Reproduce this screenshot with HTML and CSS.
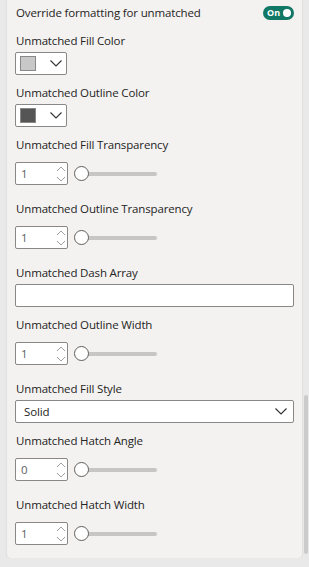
FILE: index.html
```html
<!DOCTYPE html>
<html lang="en">
<head>
    <meta charset="UTF-8">
    <meta name="viewport" content="width=device-width, initial-scale=1.0">
    <title>Unmatched Formatting</title>
    <link rel="stylesheet" href="styles.css">
</head>
<body>
    <div class="pane">
        <div class="card">
            <div class="header">
                <span class="header-title">Override formatting for unmatched</span>
                <div class="toggle"><span>On</span><i class="knob"></i></div>
            </div>

            <div class="group">
                <div class="label">Unmatched Fill Color</div>
                <div class="color-pick">
                    <span class="swatch swatch-light"></span>
                    <svg class="chevron" width="12" height="7" viewBox="0 0 12 7"><path d="M0.5 0.5 L6 6 L11.5 0.5" fill="none" stroke="#323130" stroke-width="1.1"/></svg>
                </div>
            </div>

            <div class="group">
                <div class="label">Unmatched Outline Color</div>
                <div class="color-pick">
                    <span class="swatch swatch-dark"></span>
                    <svg class="chevron" width="12" height="7" viewBox="0 0 12 7"><path d="M0.5 0.5 L6 6 L11.5 0.5" fill="none" stroke="#323130" stroke-width="1.1"/></svg>
                </div>
            </div>

            <div class="group">
                <div class="label">Unmatched Fill Transparency</div>
                <div class="slider-row">
                    <div class="num-input">
                        <span class="num-value">1</span>
                        <svg class="spinner" width="10" height="16" viewBox="0 0 10 16"><path d="M1 5 L5 1 L9 5 M1 11 L5 15 L9 11" fill="none" stroke="#a19f9d" stroke-width="1"/></svg>
                    </div>
                    <div class="slider"><span class="thumb"></span><span class="track"></span></div>
                </div>
            </div>

            <div class="group">
                <div class="label">Unmatched Outline Transparency</div>
                <div class="slider-row">
                    <div class="num-input">
                        <span class="num-value">1</span>
                        <svg class="spinner" width="10" height="16" viewBox="0 0 10 16"><path d="M1 5 L5 1 L9 5 M1 11 L5 15 L9 11" fill="none" stroke="#a19f9d" stroke-width="1"/></svg>
                    </div>
                    <div class="slider"><span class="thumb"></span><span class="track"></span></div>
                </div>
            </div>

            <div class="group">
                <div class="label">Unmatched Dash Array</div>
                <div class="text-input"></div>
            </div>

            <div class="group">
                <div class="label">Unmatched Outline Width</div>
                <div class="slider-row">
                    <div class="num-input">
                        <span class="num-value">1</span>
                        <svg class="spinner" width="10" height="16" viewBox="0 0 10 16"><path d="M1 5 L5 1 L9 5 M1 11 L5 15 L9 11" fill="none" stroke="#a19f9d" stroke-width="1"/></svg>
                    </div>
                    <div class="slider"><span class="thumb"></span><span class="track"></span></div>
                </div>
            </div>

            <div class="group">
                <div class="label">Unmatched Fill Style</div>
                <div class="dropdown">
                    <span>Solid</span>
                    <svg class="chevron" width="12" height="7" viewBox="0 0 12 7"><path d="M0.5 0.5 L6 6 L11.5 0.5" fill="none" stroke="#323130" stroke-width="1.1"/></svg>
                </div>
            </div>

            <div class="group">
                <div class="label">Unmatched Hatch Angle</div>
                <div class="slider-row">
                    <div class="num-input">
                        <span class="num-value">0</span>
                        <svg class="spinner" width="10" height="16" viewBox="0 0 10 16"><path d="M1 5 L5 1 L9 5 M1 11 L5 15 L9 11" fill="none" stroke="#a19f9d" stroke-width="1"/></svg>
                    </div>
                    <div class="slider"><span class="thumb"></span><span class="track"></span></div>
                </div>
            </div>

            <div class="group">
                <div class="label">Unmatched Hatch Width</div>
                <div class="slider-row">
                    <div class="num-input">
                        <span class="num-value">1</span>
                        <svg class="spinner" width="10" height="16" viewBox="0 0 10 16"><path d="M1 5 L5 1 L9 5 M1 11 L5 15 L9 11" fill="none" stroke="#a19f9d" stroke-width="1"/></svg>
                    </div>
                    <div class="slider"><span class="thumb"></span><span class="track"></span></div>
                </div>
            </div>
        </div>

        <div class="scrollbar"><div class="scroll-thumb"></div></div>
    </div>
</body>
</html>
```

FILE: styles.css
```css
body, html {
    margin: 0;
    padding: 0;
    background: #e9e9e9;
    color: #252423;
    font-family: "Open Sans", "Noto Sans", sans-serif;
    font-size: 11.5px;
    letter-spacing: -0.15px;
}

.pane {
    display: flex;
    align-items: flex-start;
}

.card {
    width: 279px;
    margin-left: 7px;
    padding: 5px 8px 7px 8px;
    background: #f3f2f1;
    border-radius: 0 0 4px 4px;
    box-shadow: 0 0 2px rgba(0, 0, 0, 0.14);
}

.header {
    display: flex;
    align-items: center;
    justify-content: space-between;
    height: 16px;
    margin-bottom: 12px;
    padding-left: 1px;
}

.header-title {
    line-height: 16px;
}

/* pill switch */
.toggle {
    display: flex;
    align-items: center;
    justify-content: space-between;
    width: 31px;
    height: 14px;
    box-sizing: border-box;
    padding: 0 3px 0 4px;
    border-radius: 7px;
    background: #117865;
    color: #fff;
    letter-spacing: 0;
}

.toggle span {
    font-size: 9px;
    font-weight: 700;
    line-height: 14px;
}

.knob {
    width: 8px;
    height: 8px;
    border-radius: 50%;
    background: #fff;
}

.group {
    padding-bottom: 10px;
}

.group:last-child {
    padding-bottom: 0;
}

.label {
    height: 16px;
    line-height: 16px;
    margin-bottom: 3px;
    padding-left: 1px;
    white-space: nowrap;
}

.color-pick {
    display: flex;
    align-items: center;
    width: 52px;
    height: 23px;
    box-sizing: border-box;
    border: 1px solid #8a8886;
    border-radius: 2px;
    background: #fff;
    padding-left: 4px;
}

.swatch {
    width: 16px;
    height: 15px;
    box-sizing: border-box;
    border: 1px solid #8a8886;
}

.swatch-light {
    background: #c8c8c8;
}

.swatch-dark {
    background: #555;
}

.color-pick .chevron {
    margin-left: 14px;
}

.slider-row {
    display: flex;
    align-items: center;
    padding: 6px 0;
}

.num-input {
    display: flex;
    align-items: center;
    justify-content: space-between;
    width: 53px;
    height: 23px;
    box-sizing: border-box;
    border: 1px solid #8a8886;
    border-radius: 2px;
    background: #fff;
    padding: 0 1px 0 5px;
}

.num-value {
    color: #605e5c;
    line-height: 21px;
}

.spinner {
    display: block;
}

.slider {
    display: flex;
    align-items: center;
    margin-left: 6px;
}

.thumb {
    width: 15px;
    height: 15px;
    box-sizing: border-box;
    border: 1.5px solid #605e5c;
    border-radius: 50%;
    background: #fff;
    position: relative;
    z-index: 1;
}

.track {
    width: 72px;
    height: 4px;
    margin-left: -4px;
    border-radius: 2px;
    background: #c8c6c4;
}

.text-input {
    height: 23px;
    box-sizing: border-box;
    border: 1px solid #8a8886;
    border-radius: 2px;
    background: #fff;
}

.dropdown {
    display: flex;
    align-items: center;
    justify-content: space-between;
    height: 23px;
    box-sizing: border-box;
    border: 1px solid #8a8886;
    border-radius: 2px;
    background: #fff;
    padding: 0 6px 0 8px;
}

.scrollbar {
    width: 4px;
    margin-left: 2px;
    padding-top: 395px;
}

.scroll-thumb {
    height: 159px;
    border-radius: 2px;
    background: #cbcbcb;
}
```
